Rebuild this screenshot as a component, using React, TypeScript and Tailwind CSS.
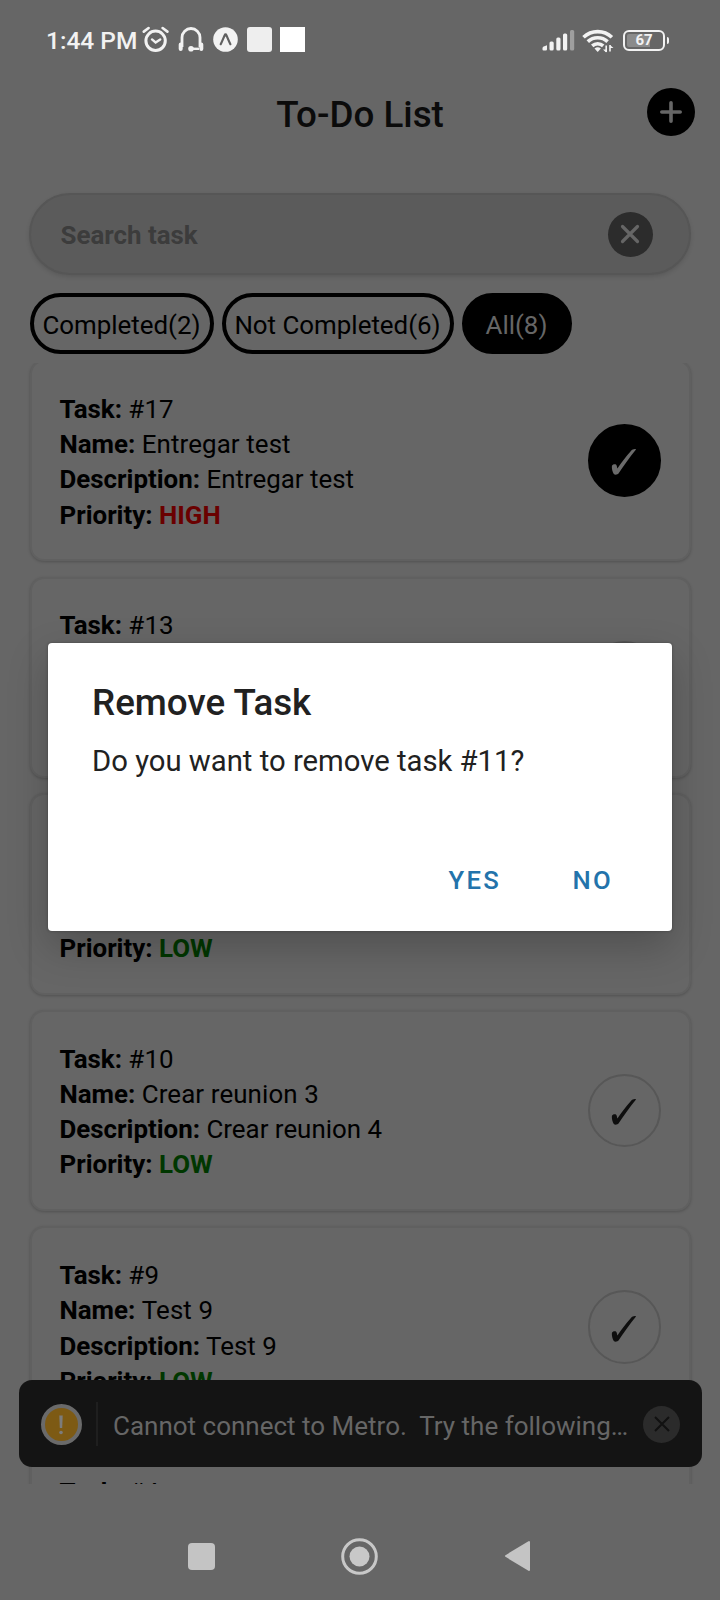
import React from "react";

type Task = { id: number; name: string; description: string; priority: "HIGH" | "LOW"; done?: boolean };

const tasks: Task[] = [
  { id: 17, name: "Entregar test", description: "Entregar test", priority: "HIGH", done: true },
  { id: 13, name: "Test 13", description: "Test 13", priority: "LOW" },
  { id: 11, name: "Crear reunion", description: "Crear reunion", priority: "LOW" },
  { id: 10, name: "Crear reunion 3", description: "Crear reunion 4", priority: "LOW" },
  { id: 9, name: "Test 9", description: "Test 9", priority: "LOW" },
  { id: 4, name: "Test 4", description: "Test 4", priority: "LOW" },
];

function StatusBar() {
  return (
    <div className="flex h-[76px] shrink-0 items-start justify-between pt-[26px] pl-[46px] pr-[51px] text-[#f2f2f2]">
      <div className="flex h-[27px] items-center">
        <span className="w-[96px] whitespace-nowrap pt-[1px] text-[24.5px] font-medium leading-[27px]">1:44 PM</span>
        <svg width="28" height="28" viewBox="0 0 28 28" fill="none" stroke="currentColor" strokeLinecap="round">
          <circle cx="13.6" cy="14.8" r="9.7" strokeWidth="3" />
          <path d="M1.8 5.6 6.6 2M20.6 2l4.8 3.6" strokeWidth="2.6" />
          <path d="M10 13.4l3.6 3 4.6-3" strokeWidth="2.4" />
        </svg>
        <svg className="ml-[8px]" width="26" height="27" viewBox="0 0 26 27" fill="none" stroke="currentColor">
          <path d="M4 21V11.500a9 9 0 0 1 18 0V21" strokeWidth="2.800" />
          <path d="M2.700 18.500v4.400M23.300 18.500v4.400" strokeWidth="4" strokeLinecap="round" />
          <path d="M13 22.800h8" strokeWidth="2.400" />
          <circle cx="13" cy="22.800" r="2.800" fill="currentColor" stroke="none" />
        </svg>
        <svg className="ml-[9px]" width="25" height="25" viewBox="0 0 25 25" fill="none">
          <circle cx="12.500" cy="12.500" r="12.300" fill="currentColor" />
          <path d="M7.700 17.200c1.600-3 3-6.700 4.100-9.200.3-.8 1.200-.8 1.500 0 1.100 2.500 2.500 6.200 4.100 9.200" stroke="#606060" strokeWidth="2.200" strokeLinecap="round" />
        </svg>
        <span className="ml-[9px] size-[25px] rounded-[3px] bg-[#eeeeee]" />
        <span className="ml-[8px] size-[25px] bg-white" />
      </div>
      <div className="flex h-[27px] items-center pt-[1px]">
        <svg width="33" height="22" viewBox="0 0 33 22" fill="currentColor">
          <path d="M.500 20.500V19q0-1.500 4.500-2.800v4q0 1.300-1.300 1.300H1.500q-1 0-1-1z" />
          <rect x="7.500" y="12.500" width="4.200" height="9" rx="1.500" />
          <rect x="14.300" y="8.500" width="4.200" height="13" rx="1.500" />
          <rect x="21" y="4.500" width="4.200" height="17" rx="1.500" />
          <rect x="28" y="1" width="4.200" height="20.500" rx="1.500" opacity="0.400" />
        </svg>
        <svg className="ml-[7px]" width="32" height="25" viewBox="0 0 32 25" fill="none" stroke="currentColor" strokeWidth="3.600">
          <path d="M1.500 9.300a20.500 20.500 0 0 1 28.400 0" />
          <path d="M5.800 13.600a14.500 14.500 0 0 1 19.800 0" />
          <path d="M10.200 17.800a8.300 8.300 0 0 1 11 0" />
          <path d="M12.500 20.500q3.200-2.600 6.400 0L15.700 24z" fill="currentColor" stroke="none" />
          <path d="M24.200 17.500v6.500M28 17v6.500" strokeWidth="1.600" />
          <path d="M21 21.500h3.200v3zM28 17l3.500 3H28z" fill="currentColor" stroke="none" />
        </svg>
        <span className="ml-[9px] flex h-[21px] w-[42px] items-center justify-center rounded-[6px] border-2 border-[#f2f2f2] bg-[linear-gradient(90deg,#8b8b8b_0_66%,#666_66%)] bg-clip-content p-[2px] text-[15px] font-bold leading-none">
          67
        </span>
        <span className="ml-[2px] h-[7px] w-[2px] rounded-r bg-[#f2f2f2]" />
      </div>
    </div>
  );
}

function Chip({ label, className }: { label: string; className: string }) {
  return (
    <div className={`flex h-[61px] items-center justify-center whitespace-nowrap rounded-full border-4 border-black pt-[4px] ${className}`}>
      {label}
    </div>
  );
}

function TaskCard({ task }: { task: Task }) {
  return (
    <div className="flex h-[201.400px] shrink-0 items-center justify-between rounded-[14px] border-2 border-[#606060] bg-[#666] pl-[28px] pr-[27.500px] shadow-[0_1px_3px_rgba(0,0,0,0.2)]">
      <div className="pt-[3.500px] leading-[35.300px]">
        <p><b>Task:</b> <span className="tracking-[0.100px]">#{task.id}</span></p>
        <p><b>Name:</b> <span className="tracking-[0.100px]">{task.name}</span></p>
        <p><b>Description:</b> {task.description}</p>
        <p>
          <b>Priority:</b>{" "}
          <b className={task.priority === "HIGH" ? "text-[#6a0000]" : "text-[#003700]"}>{task.priority}</b>
        </p>
      </div>
      <div className={`flex size-[73.500px] items-center justify-center rounded-full border-2 ${task.done ? "border-black bg-black text-[#6b6b6b]" : "border-[#575757] text-[#0e0e0e]"}`}>
        <svg className="mt-[3px]" width="26" height="28" viewBox="0 0 26 28" fill="currentColor">
          <path d="M25 1.500C24.500 .7 21.500 .9 19.500 3.400 14.800 8.500 10.500 14.500 6.400 20.500 6 19 5.900 17.600 5.200 16.700 4 15.800 1.300 16.400 .9 17.900 .6 20.500 1.500 24 2.800 26 3.800 27 6.500 26.800 7.500 25.500 12.500 18 18.500 9.500 25 1.500z" />
        </svg>
      </div>
    </div>
  );
}

function MetroToast() {
  return (
    <div className="absolute left-[19px] top-[1380px] flex h-[87px] w-[683px] items-center rounded-[13px] bg-[#141414] pl-[21.500px] pr-[22px]">
      <span className="mt-[2px] flex size-[41px] items-center justify-center rounded-full border-4 border-[#6a6a6a] bg-[#7d5a14]">
        <svg width="6" height="20" viewBox="0 0 6 20" fill="#7c7c7c">
          <path d="M1.300 .5h3.400l-.5 12.500H1.800z" />
          <circle cx="3" cy="17.500" r="1.800" />
        </svg>
      </span>
      <span className="ml-[14px] h-[44px] w-[2px] bg-[#1f1f1f]" />
      <span className="ml-[15.500px] w-[530px] whitespace-pre pt-[5px] text-[26px] text-[#666]">Cannot connect to Metro.  Try the following…</span>
      <span className="mt-px flex size-[37px] shrink-0 items-center justify-center rounded-full bg-[#2b2b2b]">
        <svg width="16" height="16" viewBox="0 0 16 16" stroke="#111" strokeWidth="2"><path d="M1 1l14 14M15 1 1 15" /></svg>
      </span>
    </div>
  );
}

function RemoveDialog() {
  return (
    <div className="absolute left-[48px] top-[643px] flex h-[287.500px] w-[624px] flex-col rounded-[4px] bg-white pl-[44px] text-[#212121] shadow-[0_16px_40px_rgba(0,0,0,0.22),0_0_3px_rgba(0,0,0,0.3)]">
      <h2 className="mt-[39px] text-[36.750px] font-medium leading-[41px]">Remove Task</h2>
      <p className="mt-[21px] text-[29.250px] leading-[34px]">Do you want to remove task #11?</p>
      <div className="mt-[86px] flex text-[25.700px] font-medium leading-[32px] tracking-[2.300px] text-[#2373ab]">
        <button className="ml-[356.500px] w-[124px] text-left">YES</button>
        <button>NO</button>
      </div>
    </div>
  );
}

export default function App() {
  return (
    <div className="relative flex h-[1600px] w-[720px] flex-col overflow-hidden bg-[#666] font-['Roboto',sans-serif] text-[25.900px] text-black">
      <StatusBar />
      <header className="grid h-[117px] shrink-0 grid-cols-[1fr_auto_1fr] items-start px-[25px]">
        <h1 className="col-start-2 mt-[18px] text-[36.750px] font-medium leading-[42px] text-[#0b0b0b]">To-Do List</h1>
        <span className="mt-[12px] flex size-[48px] items-center justify-center justify-self-end rounded-full bg-black">
          <svg width="24" height="24" viewBox="0 0 24 24" stroke="#666" strokeWidth="3.600" strokeLinecap="round"><path d="M12 2.800v18.400M2.800 12h18.400" /></svg>
        </span>
      </header>
      <div className="mx-[29px] flex h-[82px] shrink-0 items-center justify-between rounded-full border-2 border-[#565656] bg-[#5b5b5b] pl-[29.500px] pr-[36.500px] shadow-[0_2px_4px_rgba(0,0,0,0.12)]">
        <span className="pt-[2px] font-bold text-[#3c3c3c]">Search task</span>
        <span className="flex size-[45px] items-center justify-center rounded-full bg-[#2c2c2c]">
          <svg width="20" height="20" viewBox="0 0 20 20" stroke="#666" strokeWidth="3.200" strokeLinecap="round"><path d="M2.500 2.500l15 15M17.500 2.500l-15 15" /></svg>
        </span>
      </div>
      <div className="mt-[18px] flex shrink-0 gap-[8px] pl-[29.500px]">
        <Chip label="Completed(2)" className="w-[184px]" />
        <Chip label="Not Completed(6)" className="w-[232px]" />
        <Chip label="All(8)" className="w-[110px] bg-black text-[#666]" />
      </div>
      <div className="mt-[9px] flex h-[1121px] shrink-0 flex-col overflow-hidden px-[29.500px]">
        <div className="-mt-[3px] flex flex-col gap-[15.200px]">
          {tasks.map((task) => <TaskCard key={task.id} task={task} />)}
        </div>
      </div>
      <nav className="flex grow items-center pl-[188px] pt-[28px]">
        <span className="size-[27px] rounded-[4px] bg-[#c4c4c4]" />
        <svg className="ml-[126px]" width="37" height="37" viewBox="0 0 37 37" fill="none">
          <circle cx="18.500" cy="18.500" r="16.800" stroke="#c8c8c8" strokeWidth="3" />
          <circle cx="18.500" cy="18.500" r="10" fill="#c8c8c8" />
        </svg>
        <svg className="ml-[126px]" width="27" height="32" viewBox="0 0 27 32" fill="#c4c4c4" stroke="#c4c4c4" strokeWidth="2" strokeLinejoin="round">
          <path d="M2 16 25 2v28z" />
        </svg>
      </nav>
      <MetroToast />
      <RemoveDialog />
    </div>
  );
}
